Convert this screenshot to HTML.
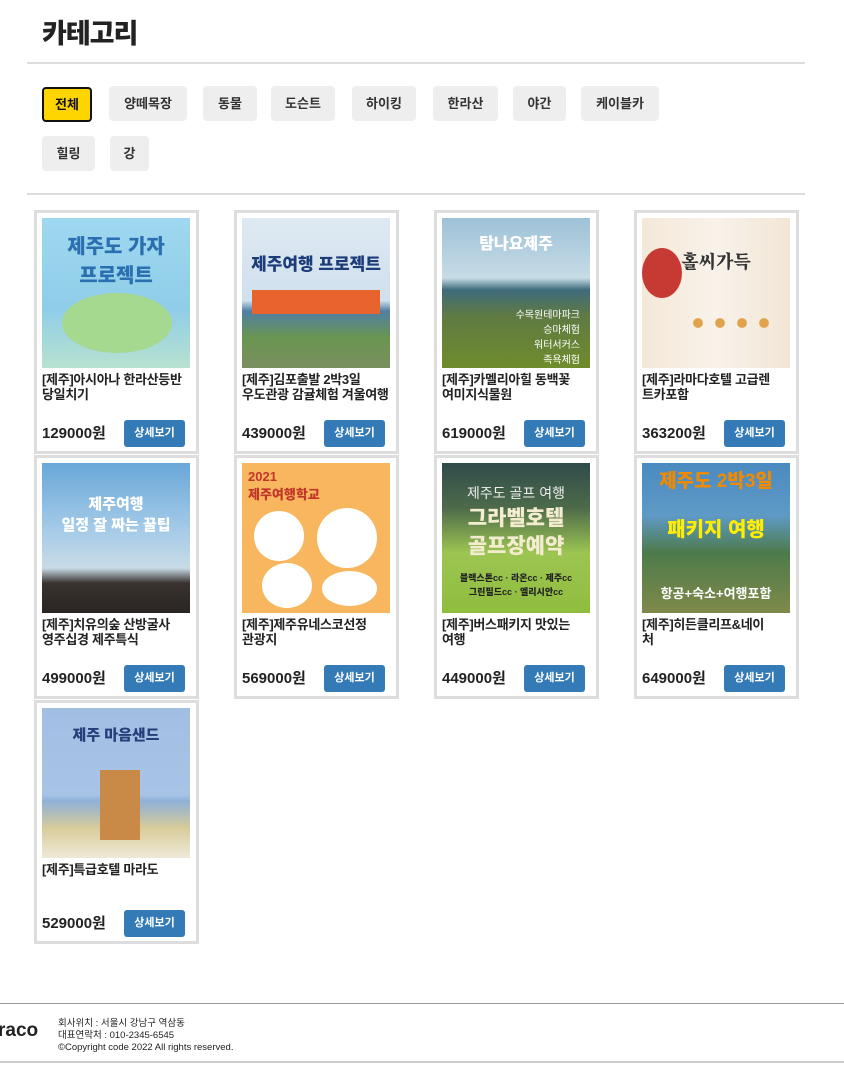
<!DOCTYPE html>
<html><head><meta charset="utf-8"><style>
*{margin:0;padding:0;box-sizing:border-box}
body{width:844px;height:1068px;background:#fff;font-family:"Liberation Sans","Noto Sans CJK KR",sans-serif;color:#222;position:relative;overflow:hidden}
h1{position:absolute;left:42px;top:12px;font-size:27px;font-weight:900;letter-spacing:-1px;color:#222}
.hr{position:absolute;left:27px;width:778px;height:2px;background:#ddd}
.tag{position:absolute;height:35px;background:#eee;border-radius:4px;font-size:13px;font-weight:bold;line-height:35px;text-align:center;color:#333}
.tag.on{background:#ffd500;border:2px solid #111;line-height:31px;color:#111}
.card{position:absolute;width:165px;height:244px;border:3px solid #ddd;background:#fff}
.img{position:absolute;left:5px;top:5px;width:148px;height:150px;overflow:hidden}
.img span{position:absolute;left:0;width:100%;text-align:center;font-weight:900}
.t{position:absolute;left:5px;top:159px;width:148px;font-size:13px;font-weight:bold;line-height:15px;letter-spacing:-0.3px;color:#222;word-break:break-all}
.p{position:absolute;left:5px;top:210px;font-size:15px;font-weight:bold;line-height:22px;color:#222}
.b{position:absolute;left:87px;top:207px;width:61px;height:27px;background:#337ab7;border-radius:3px;color:#fff;font-size:11px;font-weight:bold;line-height:27px;text-align:center}
.foot{position:absolute;left:0;top:1003px;width:844px;height:60px;border-top:1px solid #999;border-bottom:2px solid #ccc}
</style></head><body>
<h1>카테고리</h1>
<div class="hr" style="top:62px"></div>
<div class="tag on" style="left:42px;top:87px;width:50px">전체</div>
<div class="tag" style="left:109px;top:86px;width:78px">양떼목장</div>
<div class="tag" style="left:203px;top:86px;width:54px">동물</div>
<div class="tag" style="left:271px;top:86px;width:64px">도슨트</div>
<div class="tag" style="left:352px;top:86px;width:64px">하이킹</div>
<div class="tag" style="left:433px;top:86px;width:65px">한라산</div>
<div class="tag" style="left:513px;top:86px;width:53px">야간</div>
<div class="tag" style="left:581px;top:86px;width:78px">케이블카</div>
<div class="tag" style="left:42px;top:136px;width:53px">힐링</div>
<div class="tag" style="left:110px;top:136px;width:39px">강</div>
<div class="hr" style="top:193px"></div>

<div class="card" style="left:34px;top:210px"><div class="img" style="background:linear-gradient(#9fd8f0,#8fcde8 60%,#b7e2cf)"><span style="top:12px;font-size:20px;color:#2a6fb0">제주도 가자<br>프로젝트</span><div style="position:absolute;left:20px;top:75px;width:110px;height:60px;border-radius:50%;background:#a5d98f"></div></div><div class="t">[제주]아시아나 한라산등반 당일치기</div><div class="p">129000원</div><div class="b">상세보기</div></div>
<div class="card" style="left:234px;top:210px"><div class="img" style="background:linear-gradient(#dfe9f2,#cfe0ee 55%,#4f7fa4 62%,#6a9550 80%,#7a8f60)"><span style="top:32px;font-size:17px;color:#1d3d7a">제주여행 프로젝트</span><div style="position:absolute;left:10px;top:72px;width:128px;height:24px;background:#e8632e"></div></div><div class="t">[제주]김포출발 2박3일<br>우도관광 감귤체험 겨울여행</div><div class="p">439000원</div><div class="b">상세보기</div></div>
<div class="card" style="left:434px;top:210px"><div class="img" style="background:linear-gradient(#9ec2d8,#c6dbe5 40%,#3e6a7c 48%,#5f7a43 65%,#6f8c2c)"><span style="top:12px;font-size:16px;color:#fff">탐나요제주</span><span style="top:88px;left:auto;right:10px;width:auto;text-align:right;font-size:10px;color:#fff;font-weight:normal">수목원테마파크<br>승마체험<br>워터서커스<br>족욕체험</span></div><div class="t">[제주]카멜리아힐 동백꽃<br>여미지식물원</div><div class="p">619000원</div><div class="b">상세보기</div></div>
<div class="card" style="left:634px;top:210px"><div class="img" style="background:linear-gradient(90deg,#f4e8d8,#f8f2ea 50%,#f2e6d5)"><div style="position:absolute;left:0;top:30px;width:40px;height:50px;border-radius:50%;background:#c73a34"></div><span style="top:30px;font-size:18px;color:#333;font-family:'Noto Serif CJK SC',serif">홀씨가득</span><div style="position:absolute;left:45px;top:95px;width:90px;height:20px;background:radial-gradient(circle,#e0a24a 30%,transparent 35%) 0 0/22px 20px"></div></div><div class="t">[제주]라마다호텔 고급렌<br>트카포함</div><div class="p">363200원</div><div class="b">상세보기</div></div>

<div class="card" style="left:34px;top:455px"><div class="img" style="background:linear-gradient(#6aa7d8,#a5cbe8 45%,#c9dbe6 70%,#3a3330 80%,#2a2522)"><span style="top:30px;font-size:15px;color:#fff">제주여행<br>일정 잘 짜는 꿀팁</span></div><div class="t">[제주]치유의숲 산방굴사<br>영주십경 제주특식</div><div class="p">499000원</div><div class="b">상세보기</div></div>
<div class="card" style="left:234px;top:455px"><div class="img" style="background:#f8b75e"><span style="top:6px;font-size:13px;color:#c2352a;text-align:left;left:6px">2021<br>제주여행학교</span><div style="position:absolute;left:12px;top:48px;width:50px;height:50px;border-radius:50%;background:#fff"></div><div style="position:absolute;left:75px;top:45px;width:60px;height:60px;border-radius:50%;background:#fff"></div><div style="position:absolute;left:20px;top:100px;width:50px;height:45px;border-radius:50%;background:#fff"></div><div style="position:absolute;left:80px;top:108px;width:55px;height:35px;border-radius:50%;background:#fff"></div></div><div class="t">[제주]제주유네스코선정<br>관광지</div><div class="p">569000원</div><div class="b">상세보기</div></div>
<div class="card" style="left:434px;top:455px"><div class="img" style="background:linear-gradient(#2f4b4a,#4d6b4a 30%,#9cc552 60%,#8fbd3e)"><span style="top:20px;font-size:14px;color:#eee;font-weight:normal">제주도 골프 여행</span><span style="top:42px;font-size:21px;color:#f4ecd0;line-height:28px">그라벨호텔<br>골프장예약</span><span style="top:108px;font-size:9px;color:#222;line-height:14px">블랙스톤cc · 라온cc · 제주cc<br>그린필드cc · 엘리시안cc</span></div><div class="t">[제주]버스패키지 맛있는<br>여행</div><div class="p">449000원</div><div class="b">상세보기</div></div>
<div class="card" style="left:634px;top:455px"><div class="img" style="background:linear-gradient(#4a8ac0,#5f9ac6 35%,#4d7a4a 60%,#7f8a4a)"><span style="top:8px;font-size:19px;color:#f08a00;line-height:22px">제주도 2박3일</span><span style="top:50px;font-size:20px;color:#ffee00">패키지 여행</span><span style="top:120px;font-size:13px;color:#fff;font-weight:bold">항공+숙소+여행포함</span></div><div class="t">[제주]히든클리프&amp;네이<br>처</div><div class="p">649000원</div><div class="b">상세보기</div></div>

<div class="card" style="left:34px;top:700px"><div class="img" style="background:linear-gradient(#a2bfe3,#a7c3e6 58%,#8fb0d8 62%,#d8cc9a 80%,#eee9d8)"><span style="top:16px;font-size:15px;color:#253e7a">제주 마음샌드</span><div style="position:absolute;left:58px;top:62px;width:40px;height:70px;background:#c98a48"></div></div><div class="t">[제주]특급호텔 마라도</div><div class="p">529000원</div><div class="b">상세보기</div></div>

<div class="foot">
<div style="position:absolute;left:-2px;top:16px;font-size:19px;font-weight:900;color:#222">raco</div>
<div style="position:absolute;left:58px;top:14px;font-size:9.5px;line-height:12px;color:#222">회사위치 : 서울시 강남구 역삼동<br>대표연락처 : 010-2345-6545<br>©Copyright code 2022 All rights reserved.</div>
</div>
</body></html>
